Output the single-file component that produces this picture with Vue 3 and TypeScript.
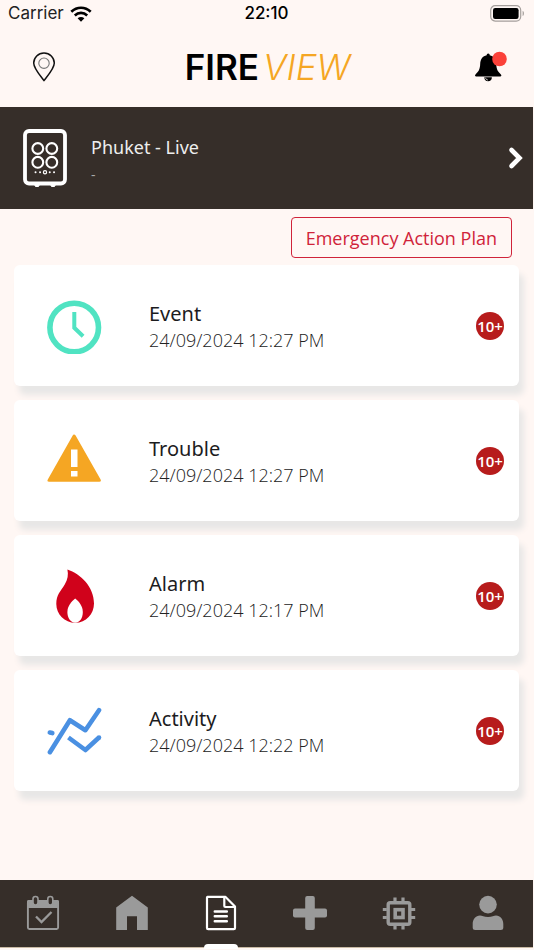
<script setup lang="ts">
type IconName = 'clock' | 'warning' | 'flame' | 'chart'

interface Category {
  title: string
  time: string
  count: string
  icon: IconName
}

const categories: Category[] = [
  { title: 'Event', time: '24/09/2024 12:27 PM', count: '10+', icon: 'clock' },
  { title: 'Trouble', time: '24/09/2024 12:27 PM', count: '10+', icon: 'warning' },
  { title: 'Alarm', time: '24/09/2024 12:17 PM', count: '10+', icon: 'flame' },
  { title: 'Activity', time: '24/09/2024 12:22 PM', count: '10+', icon: 'chart' },
]
</script>

<template>
  <div class="screen">
    <div class="status">
      <div class="carrier">
        <span>Carrier</span>
        <svg width="22" height="16" viewBox="0 0 22 16" aria-hidden="true">
          <g fill="none" stroke="#000" stroke-width="2.7">
            <path d="M1.3 5.8C7 .4 15 .4 20.7 5.8" />
            <path d="M4.8 9.4c3.6-3.3 8.8-3.3 12.4 0" />
          </g>
          <path d="M7.6 12.2c2-1.7 4.8-1.7 6.8 0L11 15.7Z" />
        </svg>
      </div>
      <span class="clock">22:10</span>
      <svg class="battery" width="35" height="17" viewBox="0 0 35 17" aria-hidden="true">
        <rect x=".7" y=".7" width="30" height="15.4" rx="4.5" fill="none" stroke="#a59f9c" stroke-width="1.2" />
        <rect x="3" y="3" width="25.6" height="11" rx="2.2" />
        <path d="M32.6 5.7c1.8.8 1.8 4.6 0 5.4Z" fill="#a59f9c" />
      </svg>
    </div>

    <header class="header">
      <button class="icon-button" type="button" aria-label="Location">
        <svg width="24" height="30" viewBox="0 0 24 30" fill="none">
          <path d="M12 28.6C8.600 24 1.700 16.500 1.700 11a10.300 10 0 0 1 20.600 0C22.300 16.500 15.400 24 12 28.600Z" stroke="#111" stroke-width="1.500" stroke-linejoin="round" />
          <circle cx="12" cy="11.200" r="5.200" stroke="#777" stroke-width="1.100" />
        </svg>
      </button>
      <h1 class="logo"><span class="fire">FIRE</span><span class="view">VIEW</span></h1>
      <button class="icon-button" type="button" aria-label="Notifications">
        <svg width="34" height="32" viewBox="0 0 34 32">
          <path d="M14.200 2.500c1 0 1.500.7 1.500 1.800 4 .8 6.300 4 6.500 8.500.2 5.500 1.600 8 4.700 10.600.9.900.5 2-.7 2H2.200c-1.200 0-1.600-1.100-.7-2 3.100-2.600 4.500-5.100 4.700-10.600.2-4.500 2.500-7.700 6.500-8.500 0-1.100.5-1.800 1.500-1.800Z" />
          <path d="M10.300 26.300h7.600c0 2.500-1.600 4-3.800 4s-3.800-1.500-3.800-4Z" />
          <path d="M11.600 26.800c.2 1.400 1 2.100 2.300 2.200" fill="none" stroke="#fff7f4" stroke-width=".8" />
          <circle cx="25.500" cy="8" r="7.300" fill="#fb4139" />
        </svg>
      </button>
    </header>

    <button class="site" type="button">
      <svg width="44" height="58" viewBox="0 0 44 58" fill="none" stroke="#fff" aria-hidden="true">
        <rect x="2" y="2" width="40" height="52.500" rx="4" stroke-width="3.800" />
        <circle cx="14.800" cy="19.500" r="5.400" stroke-width="2.100" />
        <circle cx="28.800" cy="19.500" r="5.400" stroke-width="2.100" />
        <circle cx="14.800" cy="33.300" r="5.400" stroke-width="2.100" />
        <circle cx="28.800" cy="33.300" r="5.400" stroke-width="2.100" />
        <circle cx="22" cy="43.300" r="1.600" stroke-width="1.200" />
        <path d="M12.500 43.300h.1M17 43.300h.1M26.700 43.300h.1M31 43.300h.1" stroke-width="1.900" stroke-linecap="round" />
        <path d="M11.500 55.500h5l-1 2h-3ZM27.500 55.500h5l-1 2h-3Z" fill="#fff" stroke-width="1" />
      </svg>
      <span class="site-text">
        <span class="site-name">Phuket - Live</span>
        <span class="site-note">-</span>
      </span>
      <svg width="16" height="24" viewBox="0 0 16 24" fill="none" aria-hidden="true">
        <path d="M3.500 4l8 8-8 8" stroke="#fff" stroke-width="4.600" stroke-linecap="round" />
      </svg>
    </button>

    <main class="content">
      <button class="plan" type="button">Emergency Action Plan</button>

      <ul class="cards">
        <li v-for="item in categories" :key="item.title">
          <a class="card" href="#">
            <svg class="card-icon" width="56" height="56" viewBox="0 0 56 56" fill="none" aria-hidden="true">
              <g v-if="item.icon === 'clock'" stroke="#50e3c2">
                <circle cx="28.200" cy="29.500" r="24.300" stroke-width="5.600" />
                <path d="M28.300 14v15.800l8.800 8.500" stroke-width="4" />
              </g>
              <g v-else-if="item.icon === 'warning'">
                <path d="M28 1.500c.7 0 1.200.4 1.600 1l25 44c.7 1.300.2 2.300-1.200 2.300H3c-1.400 0-2-1-1.200-2.300l24.900-44c.3-.6.7-1 1.300-1Z" fill="#f5a623" />
                <path d="M25 16.500h6.500v17.500H25ZM25 38h6.500v5.500H25Z" fill="#fff" />
              </g>
              <g v-else-if="item.icon === 'flame'">
                <path d="M21.400 1.500C34.500 6 48 18.500 48 35.500c0 10.500-8 19.300-18.700 19.300S10.300 46.500 10.300 36c0-9.500 4.200-12.300 8.700-20 2.700-4.500 3.500-9.500 2.400-14.500Z" fill="#d0021b" />
                <path d="M29.200 30.500c3.800 3 7.600 7.500 7.600 13.500 0 6-2.800 10.500-7.600 10.800-4.800-.3-7.800-4.800-7.800-10.800 0-6 4-10.500 7.800-13.500Z" fill="#fff" />
              </g>
              <g v-else stroke="#4a90e2" stroke-width="4.600" stroke-linecap="round" stroke-linejoin="round">
                <path d="M3.900 49.200l20-32 15.500 10L53 7.200" />
                <path d="M22.400 34.500l17 12.500L53 34.500" stroke-linecap="butt" />
                <path d="M53 34.500h.01" />
                <path d="M3.800 29.500l2.500.6" />
              </g>
            </svg>
            <span class="card-text">
              <span class="card-title">{{ item.title }}</span>
              <span class="card-time">{{ item.time }}</span>
            </span>
            <span class="badge">{{ item.count }}</span>
          </a>
        </li>
      </ul>
    </main>

    <nav class="tabs">
      <a class="tab" href="#" aria-label="Schedule">
        <svg width="36" height="36" viewBox="0 0 36 36" fill="none">
          <path d="M2 6.500q0-1.500 1.500-1.500h29Q34 5 34 6.500V13H2Z" fill="#9a9a9a" />
          <rect x="2.900" y="6" width="30.200" height="28" rx="1.500" stroke="#9a9a9a" stroke-width="1.900" />
          <rect x="8" y="1.500" width="5" height="8.500" rx="2.400" fill="#362e29" stroke="#9a9a9a" stroke-width="1.600" />
          <rect x="22.800" y="1.500" width="5" height="8.500" rx="2.400" fill="#362e29" stroke="#9a9a9a" stroke-width="1.600" />
          <path d="M11 21.500l5.500 5.500L26.500 17" stroke="#9a9a9a" stroke-width="2.300" />
        </svg>
      </a>
      <a class="tab" href="#" aria-label="Home">
        <svg width="36" height="36" viewBox="0 0 36 36">
          <path d="M18 .8L33.800 12.500V35H23V21.300H13V35H2.200V12.500Z" fill="#9a9a9a" />
        </svg>
      </a>
      <a class="tab active" href="#" aria-label="Reports" aria-current="page">
        <svg width="36" height="36" viewBox="0 0 36 36" fill="none" stroke="#fff" stroke-width="2.200" stroke-linejoin="round">
          <path d="M4.500 1.800h17.800L32 11.500V33q0 1.200-1.200 1.200H5.200Q4 34.200 4 33V3q0-1.200.5-1.200Z" />
          <path d="M21.300 2v9q0 1 1 1H32" />
          <path d="M11.800 16.500h12M11.800 21.300h12M11.800 26.300h12" stroke-width="2.500" stroke-linecap="round" />
        </svg>
      </a>
      <a class="tab" href="#" aria-label="Add">
        <svg width="36" height="36" viewBox="0 0 36 36" fill="#9a9a9a">
          <rect x="13.200" y="1" width="9.600" height="34" rx="2" />
          <rect x="1" y="13.500" width="34" height="9" rx="2" />
        </svg>
      </a>
      <a class="tab" href="#" aria-label="Devices">
        <svg width="36" height="36" viewBox="0 0 36 36" fill="none" stroke="#9a9a9a">
          <rect x="7.200" y="7.700" width="21.600" height="21.600" rx="2" stroke-width="3.400" />
          <rect x="14.200" y="14.700" width="7.800" height="7.800" stroke-width="3.600" />
          <path d="M14 2.500v4M22 2.500v4M14 30v4.500M22 30v4.500M1.800 14.500h4M1.800 22.500h4M30 14.500h4.200M30 22.500h4.200" stroke-width="3.200" />
        </svg>
      </a>
      <a class="tab" href="#" aria-label="Profile">
        <svg width="36" height="36" viewBox="0 0 36 36" fill="#9a9a9a">
          <circle cx="18" cy="9.600" r="8.800" />
          <path d="M10 20.500c2 0 4 1.500 8 1.500s6-1.500 8-1.500c4.300 0 7.300 4 7.300 8.500v3.500q0 2.500-2.500 2.500H5.200q-2.500 0-2.500-2.500V29c0-4.500 3-8.500 7.300-8.500Z" />
        </svg>
      </a>
    </nav>
  </div>
</template>

<style>
body {
  background: #fff7f4;
}
</style>

<style scoped>
.screen {
  box-sizing: border-box;
  display: flex;
  flex-direction: column;
  min-height: 100vh;
  padding-right: 1px;
  background: #fff7f4;
  font-family: "Open Sans", "Noto Sans", sans-serif;
  color: #000;
}

button {
  margin: 0;
  padding: 0;
  border: 0;
  background: none;
  font: inherit;
  color: inherit;
  cursor: pointer;
}

a {
  color: inherit;
  text-decoration: none;
}

svg {
  display: block;
  flex: none;
}

.status {
  display: grid;
  grid-template-columns: 1fr auto 1fr;
  align-items: center;
  height: 27px;
  padding: 0 8px;
  font-family: Inter, sans-serif;
  font-size: 17px;
  line-height: 27px;
}

.carrier {
  display: flex;
  align-items: center;
  gap: 6px;
  color: #222;
}

.clock {
  font-weight: 500;
}

.battery {
  justify-self: end;
}

.header {
  display: flex;
  align-items: center;
  justify-content: space-between;
  height: 80px;
  padding: 0 22px 0 24px;
}

.icon-button {
  display: flex;
  justify-content: center;
  width: 40px;
}

.logo {
  display: flex;
  gap: 4px;
  margin: 0;
  font-family: Inter, sans-serif;
  font-size: 35px;
  line-height: 42px;
}

.fire {
  font-weight: 600;
}

.view {
  font-weight: 300;
  font-style: italic;
  color: #f5a623;
}

.site {
  display: flex;
  align-items: center;
  height: 102px;
  padding: 0 9px 0 23px;
  background: #362e29;
  color: #eee;
  text-align: left;
}

.site-text {
  display: flex;
  flex: 1;
  flex-direction: column;
  padding: 6px 0 0 24px;
}

.site-name {
  font-family: "Noto Sans", sans-serif;
  font-size: 18px;
  line-height: 28px;
}

.site-note {
  font-size: 14px;
  line-height: 28px;
  color: #aaa;
}

.content {
  display: flex;
  flex: 1;
  flex-direction: column;
  padding: 8px 14px 0;
}

.plan {
  align-self: flex-end;
  height: 41px;
  margin-right: 7px;
  padding: 0 14px;
  border: 1px solid #d0233a;
  border-radius: 4px;
  font-size: 18px;
  color: #d0233a;
}

.cards {
  display: grid;
  gap: 14px;
  margin: 7px 0 0;
  padding: 0;
  list-style: none;
}

.card {
  display: flex;
  align-items: center;
  height: 121px;
  padding: 0 15px 0 32px;
  border-radius: 6px;
  background: #fff;
  box-shadow: 5px 9px 6px #e8e7e6;
}

.card-text {
  display: flex;
  flex: 1;
  flex-direction: column;
  padding: 2px 0 0 47px;
}

.card-title {
  font-family: "Noto Sans", sans-serif;
  font-size: 20px;
  line-height: 27px;
  color: #1c1c1e;
}

.card-time {
  font-size: 18px;
  font-weight: 300;
  line-height: 26px;
  color: #222;
}

.badge {
  width: 28px;
  height: 28px;
  border-radius: 50%;
  background: #b71c1c;
  color: #fff;
  font-size: 15px;
  font-weight: 600;
  line-height: 28px;
  text-align: center;
}

.tabs {
  display: flex;
  justify-content: space-between;
  height: 67px;
  padding: 0 27px 0 25px;
  margin-bottom: 2px;
  border-bottom: 1px solid #c9b9a4;
  background: #362e29;
}

.tab {
  position: relative;
  padding-top: 15px;
}

.active::after {
  content: "";
  position: absolute;
  bottom: -2px;
  left: 50%;
  width: 34px;
  height: 5px;
  border-radius: 4px 4px 0 0;
  background: #fff;
  transform: translateX(-50%);
}
</style>
